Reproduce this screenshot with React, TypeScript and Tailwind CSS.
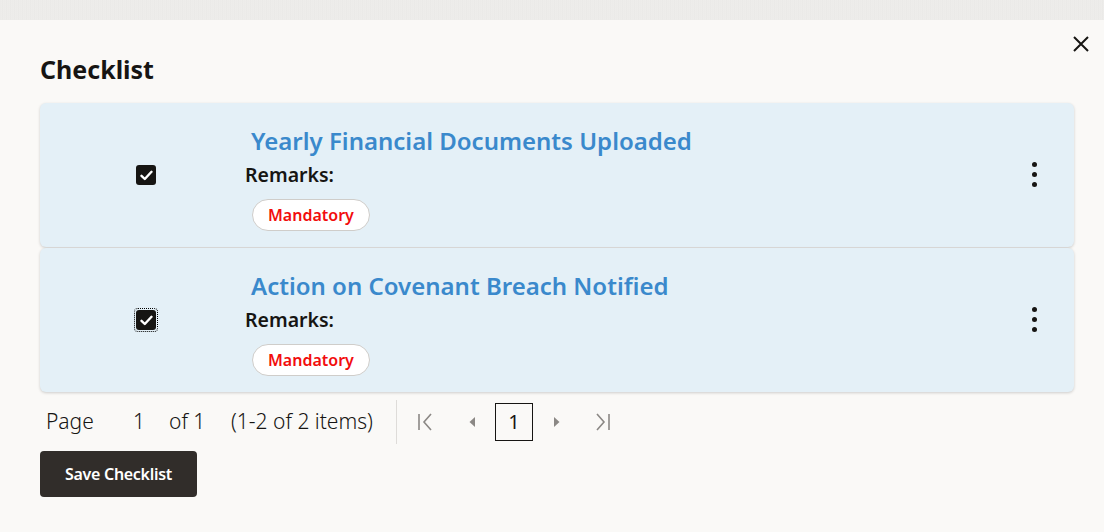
import { useState } from "react";

type Item = { id: number; title: string; checked: boolean; focused?: boolean };

const items: Item[] = [
  { id: 1, title: "Yearly Financial Documents Uploaded", checked: true },
  { id: 2, title: "Action on Covenant Breach Notified", checked: true, focused: true },
];

function CheckBox({ checked, focused }: { checked: boolean; focused?: boolean }) {
  return (
    <div
      className={
        focused
          ? "mb-[6px] outline-1 outline-dotted outline-black outline-offset-1 rounded-[2px]"
          : "mb-[6px]"
      }
    >
      <div className="w-[20px] h-[20px] rounded-[3px] bg-[#161513] flex items-center justify-center">
        {checked && (
          <svg width="13" height="11" viewBox="0 0 13 11" fill="none">
            <path
              d="M1.5 5.8 L4.8 9 L11.5 1.8"
              stroke="white"
              strokeWidth="2.4"
              strokeLinecap="round"
              strokeLinejoin="round"
            />
          </svg>
        )}
      </div>
    </div>
  );
}

function Kebab() {
  return (
    <button className="mb-[7px] flex flex-col items-center gap-[5px] w-4">
      <span className="w-[5px] h-[5px] rounded-full bg-[#161513]" />
      <span className="w-[5px] h-[5px] rounded-full bg-[#161513]" />
      <span className="w-[5px] h-[5px] rounded-full bg-[#161513]" />
    </button>
  );
}

function ChecklistCard({ item }: { item: Item }) {
  return (
    <div className="flex items-center bg-[#e4f0f7] rounded-[6px] shadow-[0_1px_3px_rgba(0,0,0,0.18)] pt-[22px] pb-[16px] pl-[96px] pr-[32px]">
      <CheckBox checked={item.checked} focused={item.focused} />
      <div className="flex-1 ml-[89px] flex flex-col items-start">
        <a className="pl-[6px] text-[24px] leading-[32px] font-semibold text-[#3a89cc] cursor-pointer">
          {item.title}
        </a>
        <div className="mt-[5px] text-[19.5px] leading-[26px] font-semibold text-[#161513]">
          Remarks:
        </div>
        <span className="mt-[11px] ml-[7px] h-[32px] px-[15px] flex items-center rounded-full bg-white border border-[#cfcdca] text-[16px] font-semibold text-[#f20d0d]">
          Mandatory
        </span>
      </div>
      <Kebab />
    </div>
  );
}

function PagerIcon({ kind }: { kind: "first" | "prev" | "next" | "last" }) {
  const stroke = "#8b8885";
  if (kind === "first")
    return (
      <svg width="16" height="20" viewBox="0 0 16 20" fill="none">
        <path d="M2 2 V18" stroke={stroke} strokeWidth="1.6" />
        <path d="M14 2 L7 10 L14 18" stroke={stroke} strokeWidth="1.6" />
      </svg>
    );
  if (kind === "last")
    return (
      <svg width="16" height="20" viewBox="0 0 16 20" fill="none">
        <path d="M14 2 V18" stroke={stroke} strokeWidth="1.6" />
        <path d="M2 2 L9 10 L2 18" stroke={stroke} strokeWidth="1.6" />
      </svg>
    );
  if (kind === "prev")
    return (
      <svg width="8" height="12" viewBox="0 0 8 12">
        <path d="M7 1 L1.5 6 L7 11 Z" fill={stroke} />
      </svg>
    );
  return (
    <svg width="8" height="12" viewBox="0 0 8 12">
      <path d="M1 1 L6.5 6 L1 11 Z" fill={stroke} />
    </svg>
  );
}

export default function App() {
  const [page] = useState(1);

  return (
    <div
      className="w-[1104px] h-[532px] flex flex-col bg-[#faf9f7] overflow-hidden"
      style={{ fontFamily: '"Noto Sans", "Open Sans", sans-serif' }}
    >
      {/* textured strip behind the dialog */}
      <div className="h-[20px] bg-[#ebeae8] bg-[repeating-linear-gradient(90deg,#e6e5e3_0px,#f2f1ef_1px,#e9e8e6_2px,#efeeec_4px)]" />

      <div className="relative flex-1 pl-[40px] pr-[30px] pt-[34px]">
        <button className="absolute right-[13px] top-[14px] w-[20px] h-[20px] flex items-center justify-center">
          <svg width="18" height="18" viewBox="0 0 18 18" fill="none">
            <path d="M2 2 L16 16 M16 2 L2 16" stroke="#161513" strokeWidth="2" />
          </svg>
        </button>

        <h1 className="text-[25px] leading-[30px] font-bold text-[#161513]">Checklist</h1>

        <div className="mt-[19px] flex flex-col gap-[1px]">
          {items.map((item) => (
            <ChecklistCard key={item.id} item={item} />
          ))}
        </div>

        <div className="mt-[8px] flex items-center h-[44px] text-[21px] font-light text-[#161513]">
          <span className="ml-[6px] w-[87px]">Page</span>
          <span className="w-[36px]">{page}</span>
          <span className="w-[62px]">of 1</span>
          <span className="w-[144px] whitespace-nowrap">(1-2 of 2 items)</span>
          <div className="ml-[21px] w-px h-[44px] bg-[#dedcd9]" />
          <button className="ml-[20px] flex items-center">
            <PagerIcon kind="first" />
          </button>
          <button className="ml-[35px] flex items-center">
            <PagerIcon kind="prev" />
          </button>
          <span className="ml-[19px] w-[38px] h-[38px] border border-[#161513] flex items-center justify-center text-[20px] font-normal">
            1
          </span>
          <button className="ml-[20px] flex items-center">
            <PagerIcon kind="next" />
          </button>
          <button className="ml-[34px] flex items-center">
            <PagerIcon kind="last" />
          </button>
        </div>

        <button className="mt-[7px] h-[46px] w-[157px] rounded-[4px] bg-[#312d2a] text-white text-[16px] font-semibold tracking-[-0.3px]">
          Save Checklist
        </button>
      </div>
    </div>
  );
}
